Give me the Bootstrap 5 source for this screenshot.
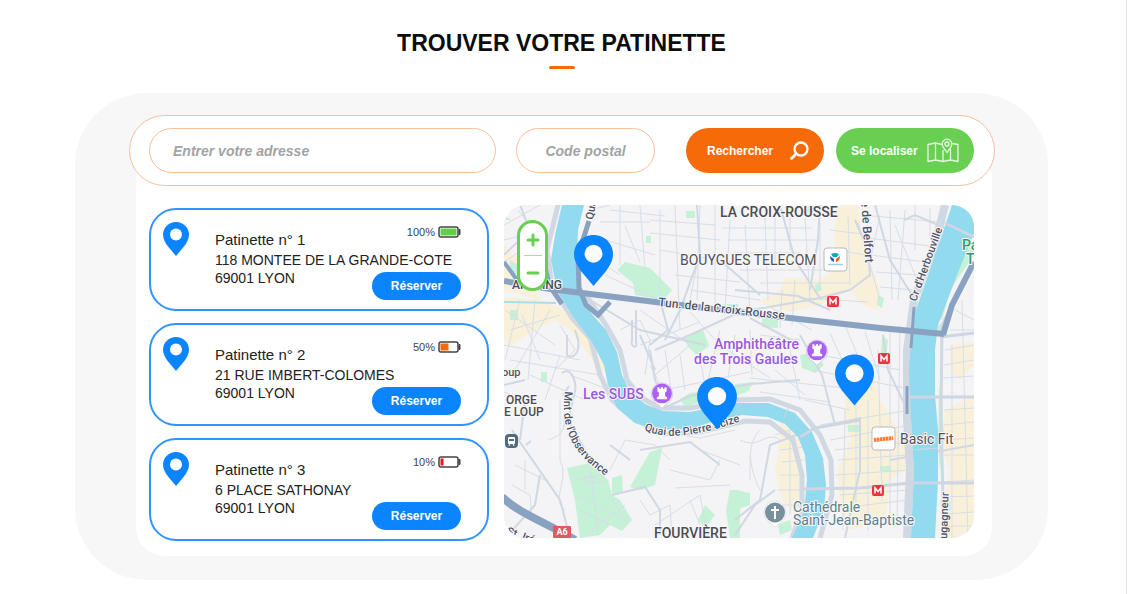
<!DOCTYPE html>
<html lang="fr">
<head>
<meta charset="utf-8">
<meta name="viewport" content="width=device-width, initial-scale=1">
<title>Trouver votre patinette</title>
<link href="https://cdn.jsdelivr.net/npm/bootstrap@5.3.0/dist/css/bootstrap.min.css" rel="stylesheet">
<style>
  :root { --blue: #0a84ff; --orange: #f66a0a; --peach: #fac09a; --green: #69cf52; }
  body { font-family: "Liberation Sans", Arial, sans-serif; color: #222; border-right: 1px solid #e2e2e2; }
  .page { padding: 29px 78px 14px 75px; }
  .page-title { font-size: 23px; line-height: 28px; font-weight: 700; color: #0c0c0c; }
  .title-rule { width: 26px; height: 3px; margin-top: 9px; background: var(--orange); }
  .shell { margin-top: 24px; padding: 22px 53px 24px 54px; background: #f7f7f7; border-radius: 72px; }
  .search-bar { z-index: 1; padding: 12px 20px 12px 19px; border: 1px solid var(--peach); border-radius: 36px; background: #fff; }
  .field { height: 45px; min-width: 0; border: 1px solid var(--peach); border-radius: 23px; background: #fff; outline: 0; font-size: 14px; }
  .field::placeholder { color: #a3a3a3; font-weight: 700; font-style: italic; opacity: 1; }
  .field-address { flex: 1 1 200px; padding: 0 23px; }
  .field-zip { width: 139px; padding: 0 8px; margin-left: 20px; }
  .pill { height: 45px; width: 138px; border: 0; border-radius: 23px; color: #fff; font-size: 12px; font-weight: 700; padding: 0 15px 0 21px; }
  .pill-search { background: var(--orange); margin-left: 31px; }
  .pill-locate { background: var(--green); margin-left: 12px; padding-left: 15px; }
  .content { margin: -36px 3px 0 7px; padding: 55px 18px 15px 13px; border-radius: 28px; background: #fff;
             display: grid; grid-template-columns: 34fr 47fr; gap: 15px; }
  .scooters { gap: 12px; margin-top: 3px; }
  .scooter { height: 103px; border: 2px solid #3094ff; border-radius: 27px; padding: 12px 26px 0 12px; }
  .scooter-text { padding: 4px 0 0 26px; font-size: 14px; line-height: 18px; }
  .scooter-name { font-size: 15px; font-weight: 400; line-height: 18px; padding-top: 5px; margin-bottom: 2px; }
  .charge { font-size: 11px; line-height: 12px; color: #444; gap: 3px; }
  .book { width: 89px; height: 28px; margin-top: 3px; border: 0; border-radius: 14px; background: var(--blue); color: #fff; font-size: 12px; font-weight: 700; padding: 0; }
  .map-box { min-height: 333px; margin-bottom: 3px; border-radius: 22px; background: #f4f3f5; }
  .zoomer { left: 13px; top: 15px; width: 31px; border: 3px solid var(--green); border-radius: 16px; background: #fff; }
  .zoomer button { width: 25px; height: 32px; padding: 0; border: 0; background: none; }
  .zoomer hr { width: 18px; margin: 0 auto; border-top: 1px solid #a5e297; opacity: 1; }
  @media (max-width: 900px) {
    .page { padding-left: 16px; padding-right: 16px; }
    .shell { padding-left: 16px; padding-right: 16px; border-radius: 40px; }
    .content { grid-template-columns: 1fr; }
    .search-bar { flex-wrap: wrap; gap: 8px; }
    .field-zip, .pill-search, .pill-locate { margin-left: 0; }
  }
  .map-box text { font-family: Roboto, sans-serif; paint-order: stroke; stroke: #f8f8fa; stroke-width: 2px; stroke-linejoin: round; }
  .district { font-size: 14px; font-weight: 500; fill: #4c4c50; }
  .map-box .district-part { font-size: 12px; }
  .place { font-size: 14px; fill: #55504f; }
  .sight { font-size: 14px; font-weight: 500; fill: #9a58de; }
  .street { font-size: 11px; font-weight: 500; fill: #4c5567; }
  .street-main { font-size: 12px; }
  .church { font-size: 14px; font-weight: 400; fill: #607f8a; }
  .park { font-size: 14px; font-weight: 500; fill: #2f9a6b; }
  .map-box .on-sign { fill: #fff; stroke: none; font-weight: 700; font-size: 9px; text-anchor: middle; }
</style>
</head>
<body>
<svg width="0" height="0" class="position-absolute" aria-hidden="true">
  <symbol id="pin" viewBox="0 0 26 34"><path fill="#0a84ff" d="M13 0C5.800 0 0 5.700 0 12.700C0 17 2.300 20.700 4.600 24L13 34L21.400 24C23.700 20.700 26 17 26 12.700C26 5.700 20.200 0 13 0Z"/><circle cx="13" cy="12.500" r="6" fill="#fcfcfe"/></symbol>
  <symbol id="metro" viewBox="0 0 12 11"><rect width="12" height="11" rx="2" fill="#ee3340"/><path d="M3 8.500V2.800L6 6.500L9 2.800V8.500" fill="none" stroke="#fff" stroke-width="1.500"/></symbol>
  <symbol id="tower" viewBox="0 0 22 26"><path d="M11 1A10.500 10.500 0 0 1 18 19L11 25.500L4 19A10.500 10.500 0 0 1 11 1Z" fill="#fff" stroke="#d6d2de" stroke-width="1"/><circle cx="11" cy="11" r="9.500" fill="#ab5ff5"/><path fill="#fff" d="M6.500 5H8.500V6.500H10V5H12V6.500H13.500V5H15.500V9L14 10V13.500L16 15V16.500H6V15L8 13.500V10L6.500 9Z"/></symbol>
</svg>

<main class="page">
  <header class="text-center">
    <h1 class="page-title mb-0">TROUVER VOTRE PATINETTE</h1>
    <div class="title-rule mx-auto rounded-pill"></div>
  </header>

  <section class="shell">
    <form class="search-bar d-flex align-items-center position-relative" onsubmit="return false">
      <input class="field field-address" type="text" placeholder="Entrer votre adresse" aria-label="Entrer votre adresse">
      <input class="field field-zip text-center" type="text" placeholder="Code postal" aria-label="Code postal">
      <button class="pill pill-search d-flex align-items-center justify-content-between" type="submit">Rechercher
        <svg width="20" height="20" viewBox="0 0 20 20" fill="none" stroke="#fff" stroke-linecap="round"><circle cx="12" cy="8" r="6.500" stroke-width="2.300"/><path d="M7 13L2.500 17.500" stroke-width="2.800"/></svg>
      </button>
      <button class="pill pill-locate d-flex align-items-center justify-content-between" type="button">Se localiser
        <svg width="32" height="26" viewBox="0 0 32 26" fill="none" stroke="#e4f8df" stroke-width="1.300" stroke-linejoin="round"><path d="M15 6.500L8.500 5L1 6.500V23.500L8.500 22L16 23.500L23.500 22L31 23.500V6.500L25.500 5.500M8.500 5V22M16 12V23.500M23.500 11V22"/><path d="M20 14.500C17.500 11 15.200 9 15.200 6A4.800 4.800 0 0 1 24.800 6C24.800 9 22.500 11 20 14.500Z"/><circle cx="20" cy="6" r="2"/></svg>
      </button>
    </form>

    <div class="content">
      <div class="scooters d-flex flex-column">
        <article class="scooter d-flex align-items-start">
          <svg class="flex-shrink-0" width="26" height="34"><use href="#pin"/></svg>
          <div class="scooter-text flex-grow-1">
            <div class="d-flex justify-content-between align-items-start">
              <h2 class="scooter-name">Patinette n° 1</h2>
              <div class="charge d-flex align-items-center">100%
                <svg width="23" height="12" viewBox="0 0 23 12"><rect x="1" y="1" width="19" height="10" rx="2" fill="#fff" stroke="#444" stroke-width="1.500"/><path d="M21 3.500H22V8.500H21Z" fill="#444" stroke="#444"/><rect x="2.500" y="2.500" width="16" height="7" fill="#62cf4b"/></svg>
              </div>
            </div>
            <div class="text-nowrap">118 MONTEE DE LA GRANDE-COTE</div>
            <div class="d-flex justify-content-between align-items-start">69001 LYON<button class="book" type="button">Réserver</button></div>
          </div>
        </article>
        <article class="scooter d-flex align-items-start">
          <svg class="flex-shrink-0" width="26" height="34"><use href="#pin"/></svg>
          <div class="scooter-text flex-grow-1">
            <div class="d-flex justify-content-between align-items-start">
              <h2 class="scooter-name">Patinette n° 2</h2>
              <div class="charge d-flex align-items-center">50%
                <svg width="23" height="12" viewBox="0 0 23 12"><rect x="1" y="1" width="19" height="10" rx="2" fill="#fff" stroke="#444" stroke-width="1.500"/><path d="M21 3.500H22V8.500H21Z" fill="#444" stroke="#444"/><rect x="2.500" y="2.500" width="8" height="7" fill="#f66a0a"/></svg>
              </div>
            </div>
            <div class="text-nowrap">21 RUE IMBERT-COLOMES</div>
            <div class="d-flex justify-content-between align-items-start">69001 LYON<button class="book" type="button">Réserver</button></div>
          </div>
        </article>
        <article class="scooter d-flex align-items-start">
          <svg class="flex-shrink-0" width="26" height="34"><use href="#pin"/></svg>
          <div class="scooter-text flex-grow-1">
            <div class="d-flex justify-content-between align-items-start">
              <h2 class="scooter-name">Patinette n° 3</h2>
              <div class="charge d-flex align-items-center">10%
                <svg width="23" height="12" viewBox="0 0 23 12"><rect x="1" y="1" width="19" height="10" rx="2" fill="#fff" stroke="#444" stroke-width="1.500"/><path d="M21 3.500H22V8.500H21Z" fill="#444" stroke="#444"/><rect x="2.500" y="2.500" width="3" height="7" fill="#f3121d"/></svg>
              </div>
            </div>
            <div class="text-nowrap">6 PLACE SATHONAY</div>
            <div class="d-flex justify-content-between align-items-start">69001 LYON<button class="book" type="button">Réserver</button></div>
          </div>
        </article>
      </div>

      <div class="map-box position-relative overflow-hidden">
        <svg class="position-absolute top-0 start-0 w-100 h-100" viewBox="504 205 470 333" preserveAspectRatio="xMidYMid slice" role="img" aria-label="Plan de Lyon">
          <rect x="504" y="205" width="470" height="334" fill="#f4f3f5"/>
          <!-- built-up areas -->
          <g fill="#f9f0da">
            <path d="M504 245L520 262L540 300L504 290ZM504 297L540 300L565 310L580 330L600 345L612 375L600 370L570 330L555 320L535 330L510 345L504 340Z"/>
            <path d="M832 205H858L862 240L872 268L880 290L878 310L862 305L850 290L820 305L790 312L760 302L780 290L785 277L820 280L838 268L834 240L836 222Z"/>
            <path d="M845 375L875 380L880 400L895 425L905 440L905 470L890 480L885 520L850 530L840 505L838 470L850 440L845 420Z"/>
            <path d="M780 420L800 440L803 500L795 515L782 500L775 470L780 440Z"/>
            <path d="M950 345L974 342V365L960 380L950 370ZM945 410L974 395V538H948L944 500L950 470L942 450Z"/>
          </g>
          <!-- parks -->
          <g fill="#c5f1d6">
            <path d="M617 270L625 262L650 268L672 290L663 300L635 295L633 283ZM684 337L703 330L709 346L697 355L688 347Z"/>
            <path d="M567 468L590 463L608 480L612 495L620 500L632 520L622 531L610 525L600 535L580 538L575 500ZM612 478L622 475L623 493L612 493ZM630 487L650 452L662 448L655 485L640 490Z"/>
            <path d="M680 399L690 393L720 390L745 383L750 390L720 403L700 402L685 407ZM730 490H740V538H730L726 510ZM511 220H504V215ZM510 260L518 265V275L510 273ZM510 310H518V320H510ZM686 211H695V218H686ZM646 236H651V243H646ZM541 372H547V382H541ZM727 304L738 304V310L727 311Z"/>
            <path d="M762 318L778 320V328L762 327ZM815 285L820 282L822 290L816 292ZM878 295L884 298L882 308L877 305ZM882 336L888 340L886 358L880 365ZM848 425H859V432H848ZM880 466H891V471H880ZM735 490L750 493V505L735 510ZM800 355L815 352L824 365L815 373L802 368ZM735 384L755 382L745 393H735ZM805 206H812V212H805Z"/>
            <path d="M974 243L962 246L952 275L945 300L938 318L942 320L950 290L974 255ZM938 325L948 323L943 335L937 336ZM939 385L942 400L944 440L940 470L938 440ZM940 500L950 498L951 510L942 515ZM778 525L790 520L792 530L780 535ZM705 505L715 515L705 528L698 520Z"/>
          </g>
          <!-- local streets -->
          <g fill="none" stroke="#d7dee7" stroke-width="1">
            <path d="M600 222H650M605 240L655 255M620 205V265M640 205L645 270M660 210V300M675 205L680 330M700 205L697 300M715 205V310M600 262L620 275M605 275L670 305M650 220L715 225M650 233L720 240M660 250L730 262M675 275L740 282M690 290L760 300M730 220L725 310M745 225L750 315M765 218L768 300M610 210L665 216M625 226L640 262M700 250L690 300"/>
            <path d="M722 228H812M728 240H820M735 253H800M740 270H835M760 283H850M775 215V262M790 218V250M805 218L810 300M820 222V290M848 215L850 285M858 222L880 300M835 250L872 256M830 230L870 235M800 298L868 302M770 307L812 330M795 280L792 325M782 290L780 328M880 215L870 262M890 210L892 300M905 210L898 300M862 215L940 222M868 238L930 246M870 255L925 262M876 272L918 275M880 287L915 290M895 225L925 300M915 205V250M930 208V238"/>
            <path d="M640 345L700 322M655 375L690 345M650 365L668 400M665 350L672 395M680 355L685 390M700 358L705 385M655 392L750 372M720 330L708 380M735 335L728 378M750 330L752 375M620 330L640 320L650 340L645 375M690 312L720 345L770 378M640 310L690 345M760 335L800 340M830 333L860 400M845 325L872 390M865 332L880 380M820 355L900 370M812 370L905 388M750 378L845 388M760 392L830 402M775 370L805 395M790 350L800 400M805 400L850 410M890 330V520M900 325L897 525M878 350L882 500M868 400V530M856 400V510M845 410L843 530M820 425L910 410M830 440L910 425M835 450L908 442M838 460L908 455M835 475L910 470M840 495L908 490M840 508L908 500M845 522L905 518"/>
            <path d="M505 310L555 345M510 330L560 315M520 300L505 360M535 300L528 380M550 310L515 370M504 345L580 360M560 325L575 350L555 370M510 360L600 375M530 375L585 400M560 355L545 400M570 375L610 390M504 392L525 400M522 315L540 360M590 210L610 205M504 225L540 205M504 240L545 230M518 210L545 245M545 235L504 262"/>
            <path d="M945 350L974 345M944 365L974 360M943 378L974 376M944 410L974 408M944 425L974 422M944 440L974 438M944 455L974 455M944 482L974 480M944 497L974 496M944 514L974 512M944 526L974 526M952 345V538M962 300L968 538M955 310L974 320M950 330H974"/>
            <path d="M775 435L805 425M780 450L805 447M782 462L804 460M780 475L804 475M778 490L805 490M775 505L800 505M790 430V515M760 430C745 445 750 470 760 490M740 440C760 450 765 430 780 440M750 455V480M650 430L700 438L735 430M610 470L625 440L655 445L670 460M670 470L710 480L720 460M675 488L730 485M700 450L740 465M640 500L650 515L670 505L672 538M655 525L700 495L708 538M690 500L700 525M515 465L545 480M512 485L530 495L532 520M525 460V490M560 400V460C570 480 550 500 565 510M548 440C580 430 550 410 575 395"/>
            <path d="M575 480L605 475M578 495L625 520M580 510L610 525M590 465L598 535M604 480C580 490 580 470 595 478M612 500L628 522M585 535L625 505"/>
          </g>
          <g fill="none" stroke="#cfd8e3" stroke-width="2">
            <path d="M697 205L700 255L680 310L665 340M590 300L640 330L705 345M636 310V342C638 350 630 347 632 340V320M655 350L690 335L740 312L820 298M650 350L655 380L662 395M780 205L795 260L820 298L850 290L870 275L868 250L855 220M750 318L800 345M640 335L655 370M820 205L818 240L810 290M875 205L890 260L915 300M660 410L690 396L750 384L800 380M800 335L822 375L835 425L860 418V470L845 538M883 335L888 370L905 405M512 430L522 445L560 500L570 538M520 205L530 230L504 255M525 400L520 440M504 385L525 380"/>
            <path d="M526 445L531 441M562 373C572 365 578 385 574 395L568 420L585 450M563 395L569 386M508 535L535 505L540 475M575 330C585 355 570 360 567 355V335M612 495L645 487L660 510L660 535M735 520L760 500L770 445L810 430M735 535L755 505L775 490M610 445L630 460M640 450L690 442L720 465"/>
            <path d="M735 290L798 296L830 310M720 260L760 295M904 220L915 215L945 228M660 300L668 330L650 345M890 460L974 445"/>
          </g>
          <!-- river quays -->
          <g fill="none" stroke="#d0d8e2">
            <path stroke-width="5" d="M558 205L547 250L552 286L572 318L590 338L600 375L612 400L635 420L665 434L700 432L745 421L770 422L793 440L802 475L802 510L792 538"/>
            <path stroke-width="5" d="M586 295L606 325L620 350L627 380L640 397L660 408L690 408L735 400L770 399L800 410L820 435L831 460L832 495L820 538"/>
            <path stroke-width="8" d="M945 205L935 245L914 300L907 350L907 420L910 470L907 538"/>
            <path stroke-width="3" d="M974 262L942 325L941 420L944 538"/>
          </g>
          <!-- Saône and Rhône -->
          <g fill="#92daee">
            <path d="M562 205H584L578 230L577 265L581 290L590 312L606 330L617 352L622 375L630 392L645 404L662 411L690 412L735 403L768 403L795 413L812 432L823 458L826 485L824 510L813 538H792L804 512L807 480L805 455L798 437L785 424L768 417L742 415L715 421L690 429L660 430L635 423L617 408L608 385L604 365L592 342L572 315L557 290L551 260L555 235Z"/>
            <path d="M952 205H974V233L957 275L938 325L935 350L935 395L938 430L938 480L935 538H911L914 470L911 420L909 370L912 330L916 310L942 235Z"/>
          </g>
          <g fill="none" stroke="#cdd6e2">
            <path stroke-width="2" d="M504 302L556 303" stroke="#a9deeb"/>
            <path stroke-width="3" d="M803 489L860 488L910 483L974 483M907 397H974M800 437L815 428L860 420M945 223L974 237M940 337L974 333"/>
            <path stroke-width="1" d="M912 450L938 448M784 418L790 404"/>
          </g>
          <!-- main roads -->
          <g fill="none" stroke="#8aa2c1">
            <path stroke-width="4" d="M504 262L520 284"/>
            <path stroke-width="6" d="M504 281L550 289L582 293L680 305L790 318L880 328L944 334"/>
            <path stroke-width="5" d="M589 221L578 255L579 288L586 305L598 315L610 302M544 262L549 285L562 304"/>
            <path stroke-width="6" d="M943 335L952 305L974 262" stroke-linejoin="round"/>
            <path stroke-width="3" d="M914 307L911 348M907 386V414"/>
            <path stroke-width="8" d="M502 497C520 514 545 522 575 540"/>
          </g>
          <!-- labels -->
          <defs>
            <path id="tun" d="M658 306L800 321"/>
            <path id="mnt" d="M565 391C560 430 572 453 606 476"/>
            <path id="quai" d="M644 430C672 442 704 434 750 418"/>
          </defs>
          <text class="district" x="720" y="217">LA CROIX-ROUSSE</text>
          <text class="place" x="680" y="265">BOUYGUES TELECOM</text>
          <text class="street street-main"><textPath href="#tun">Tun. de la Croix-Rousse</textPath></text>
          <text class="street"><textPath href="#mnt">Mnt de l'Observance</textPath></text>
          <text class="street"><textPath href="#quai">Quai de Pierre Scize</textPath></text>
          <text class="street" transform="translate(593 220) rotate(-80)">Quai</text>
          <text class="street street-main" transform="translate(861 201) rotate(86)">e de Belfort</text>
          <text class="street" transform="translate(916 302) rotate(-70)">Cr d'Herbouville</text>
          <text class="street" transform="translate(947 539) rotate(-88)">ugagneur</text>
          <text class="street" x="502" y="376">oup</text>
          <text class="street" transform="translate(506 534) rotate(20)">St. Irénée</text>
          <text class="district district-part" x="512" y="289">ARLOING</text>
          <text class="sight" x="714" y="349">Amphithéâtre</text>
          <text class="sight" x="694" y="364">des Trois Gaules</text>
          <text class="sight" x="583" y="399">Les SUBS</text>
          <text class="district district-part" x="506" y="404">ORGE</text>
          <text class="district district-part" x="504" y="416">E LOUP</text>
          <text class="district" x="654" y="538">FOURVIÈRE</text>
          <text class="place" x="900" y="444">Basic Fit</text>
          <text class="church" x="793" y="512">Cathédrale</text>
          <text class="church" x="793" y="525">Saint-Jean-Baptiste</text>
          <text class="park" x="962" y="250">Parc</text>
          <text class="park" x="966" y="264">Tête</text>
          <!-- signs -->
          <use href="#metro" x="827" y="296" width="12" height="11"/>
          <use href="#metro" x="878" y="353" width="12" height="11"/>
          <use href="#metro" x="872" y="485" width="12" height="11"/>
          <rect x="553" y="526" width="18" height="12" rx="1" fill="#dc5b60"/><text class="on-sign" x="562" y="535">A6</text>
          <g><rect x="505" y="434" width="13" height="14" rx="4" fill="#526a80"/><rect x="508" y="437" width="7" height="7" rx="1" fill="#fff"/><path d="M509 439H514V441H509Z" fill="#526a80"/><path d="M509 446L510 444M514 446L513 444" stroke="#fff"/></g>
          <use href="#tower" x="805" y="339" width="24" height="27"/>
          <use href="#tower" x="650" y="382" width="24" height="27"/>
          <g fill="#fff" stroke="#b9b9bd"><rect x="824" y="248" width="23" height="23" rx="3"/><rect x="872" y="427" width="23" height="23" rx="3"/></g>
          <path d="M831 254Q835 252 839 254L837 257H833Z" fill="#19a5b8"/><path d="M830 256L834 259L834 262Q830 261 830 256Z" fill="#1667b9"/><path d="M840 256L836 259V262Q840 261 840 256Z" fill="#f15a2b"/><path d="M828 264.500H843" stroke="#9bd3df" stroke-width="1.500"/>
          <path d="M874 440L893 438" stroke="#f47b3c" stroke-width="4" stroke-dasharray="2.500 .5"/>
          <path d="M775 501A11.500 11.500 0 0 1 782 521L775 527L768 521A11.500 11.500 0 0 1 775 501Z" fill="#fff" stroke="#cfd5d8" stroke-width=".6"/><circle cx="775" cy="512.500" r="10" fill="#78909c"/><path d="M775 506V519M771 510H779" stroke="#fff" stroke-width="2"/>
          <!-- available scooters -->
          <use href="#pin" x="574" y="235" width="39" height="51"/>
          <use href="#pin" x="697" y="377" width="40" height="52"/>
          <use href="#pin" x="835" y="354" width="39" height="52"/>
        </svg>
        <div class="zoomer position-absolute d-flex flex-column overflow-hidden" role="group" aria-label="Zoom">
          <button type="button" aria-label="Zoomer"><svg width="14" height="14" viewBox="0 0 14 14" stroke="#69cf52" stroke-width="3" stroke-linecap="round"><path d="M2 7H12M7 2V12"/></svg></button>
          <hr>
          <button type="button" aria-label="Dézoomer"><svg width="14" height="14" viewBox="0 0 14 14" stroke="#69cf52" stroke-width="3" stroke-linecap="round"><path d="M2 7H12"/></svg></button>
        </div>
      </div>
    </div>
  </section>
</main>
<script src="https://cdn.jsdelivr.net/npm/bootstrap@5.3.0/dist/js/bootstrap.bundle.min.js"></script>
</body>
</html>
